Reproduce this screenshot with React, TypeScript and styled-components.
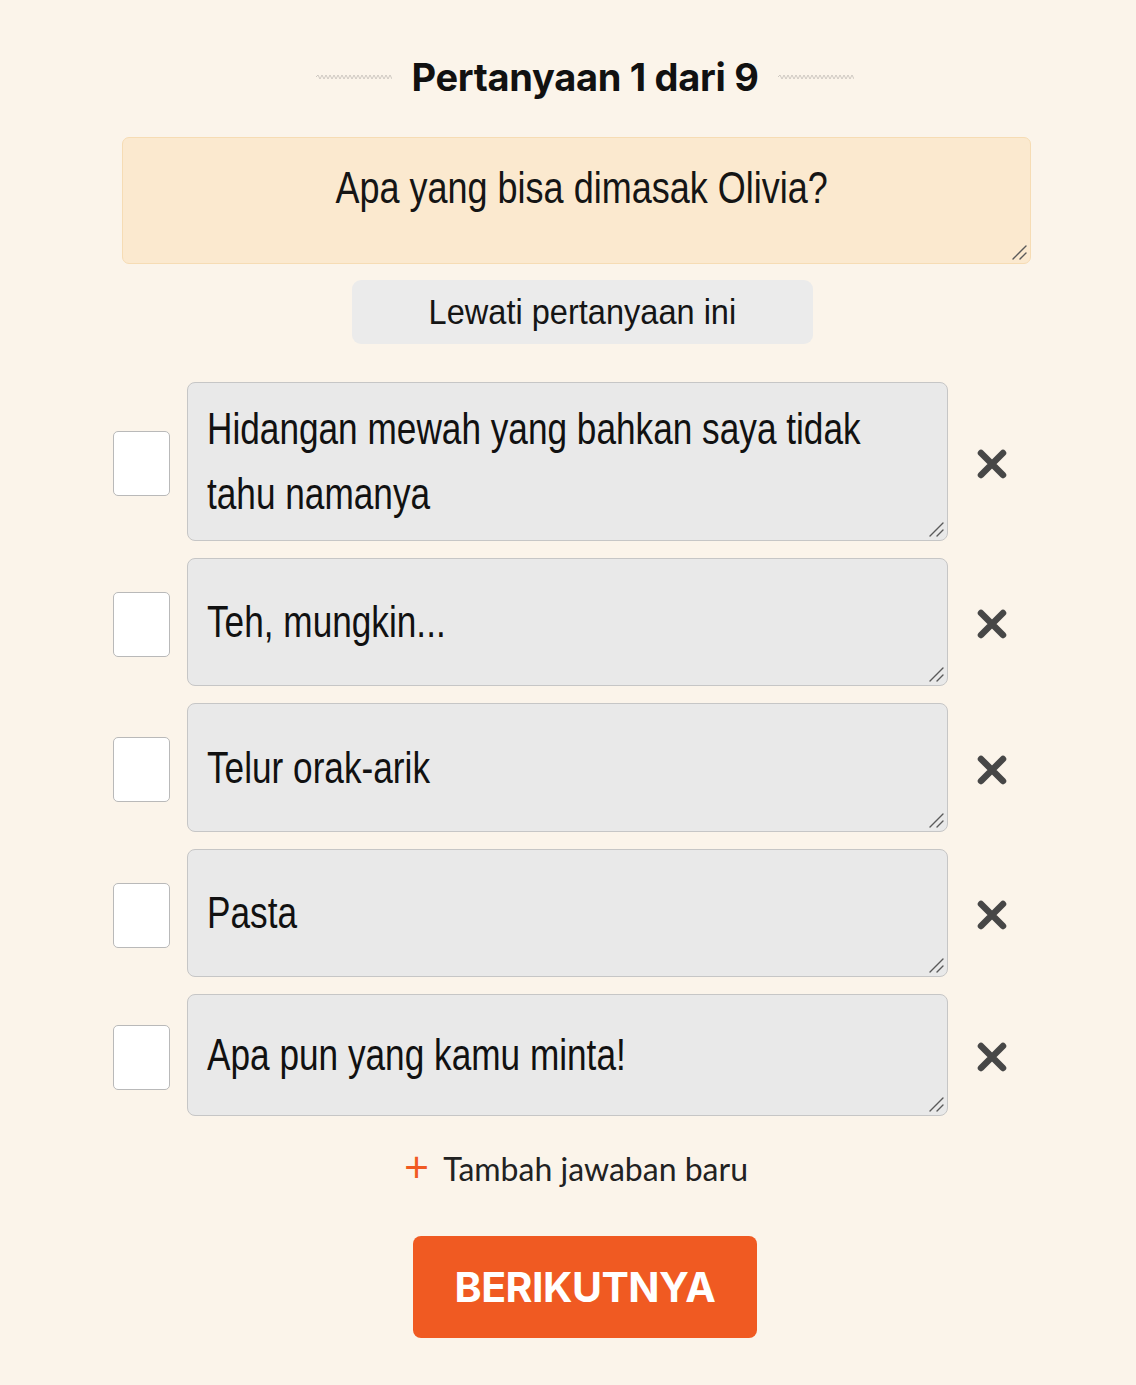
import React from 'react';
import styled, { createGlobalStyle } from 'styled-components';

const GlobalStyle = createGlobalStyle`
  html, body {
    margin: 0;
    padding: 0;
    background: #fbf4ea;
  }
  * {
    box-sizing: border-box;
  }
`;

// the reference uses a condensed face; Liberation Sans squeezed to 80% matches it
const narrow = `"Liberation Sans", Arial, sans-serif`;
const SQUEEZE = 0.8;

type Answer = { text: string; height: number; lines: number };

const answers: Answer[] = [
  { text: 'Hidangan mewah yang bahkan saya tidak tahu namanya', height: 159, lines: 2 },
  { text: 'Teh, mungkin...', height: 128, lines: 1 },
  { text: 'Telur orak-arik', height: 129, lines: 1 },
  { text: 'Pasta', height: 128, lines: 1 },
  { text: 'Apa pun yang kamu minta!', height: 122, lines: 1 },
];

const Wave = () => (
  <WaveSvg viewBox="0 0 76 6" width="76" height="6">
    <path
      d="M0 3 l2 -2 l2 4 l2 -4 l2 4 l2 -4 l2 4 l2 -4 l2 4 l2 -4 l2 4 l2 -4 l2 4 l2 -4 l2 4 l2 -4 l2 4 l2 -4 l2 4 l2 -4 l2 4 l2 -4 l2 4 l2 -4 l2 4 l2 -4 l2 4 l2 -4 l2 4 l2 -4 l2 4 l2 -4 l2 4 l2 -4 l2 4 l2 -4 l2 4 l2 -4 l2 4"
      fill="none"
      stroke="#c9c4bd"
      strokeWidth="0.9"
    />
  </WaveSvg>
);

const CloseIcon = () => (
  <svg width="32" height="32" viewBox="0 0 32 32">
    <path d="M5 5 L27 27 M27 5 L5 27" stroke="#474747" strokeWidth="6.5" strokeLinecap="round" />
  </svg>
);

const ResizeGrip = () => (
  <Grip viewBox="0 0 16 16" width="16" height="16">
    <path d="M2 15 L15 2 M9 15 L15 9" stroke="#5a5a5a" strokeWidth="1.4" strokeLinecap="round" />
  </Grip>
);

export default function App() {
  return (
    <Page>
      <GlobalStyle />
      <Header>
        <Wave />
        <Title>Pertanyaan 1 dari 9</Title>
        <Wave />
      </Header>

      <QuestionFrame>
        <QuestionInput defaultValue="Apa yang bisa dimasak Olivia?" />
        <ResizeGrip />
      </QuestionFrame>

      <SkipButton type="button">
        <SkipLabel>Lewati pertanyaan ini</SkipLabel>
      </SkipButton>

      <AnswerList>
        {answers.map((a, i) => (
          <AnswerRow key={i}>
            <CheckBox type="checkbox" />
            <AnswerFrame $h={a.height}>
              <AnswerInput defaultValue={a.text} $pad={(a.height - 3 - a.lines * 65) / 2} />
              <ResizeGrip />
            </AnswerFrame>
            <RemoveButton type="button" aria-label="hapus">
              <CloseIcon />
            </RemoveButton>
          </AnswerRow>
        ))}
      </AnswerList>

      <AddLink type="button">
        <Plus>+</Plus>
        Tambah jawaban baru
      </AddLink>

      <NextButton type="button">BERIKUTNYA</NextButton>
    </Page>
  );
}

const Page = styled.div`
  width: 1136px;
  min-height: 1385px;
  display: flex;
  flex-direction: column;
  align-items: center;
  padding-top: 52px;
`;

const Header = styled.div`
  display: flex;
  align-items: center;
  gap: 19px;
  height: 50px;
  margin-left: 34px;
`;

const WaveSvg = styled.svg`
  display: block;
`;

const Title = styled.h1`
  margin: 0;
  font-family: Inter, Roboto, sans-serif;
  font-weight: 700;
  font-size: 38px;
  color: #111;
  letter-spacing: -0.3px;
`;

const Grip = styled.svg`
  position: absolute;
  right: 3px;
  bottom: 3px;
  pointer-events: none;
`;

const QuestionFrame = styled.div`
  position: relative;
  margin-top: 35px;
  margin-left: 17px;
  width: 909px;
  height: 127px;
  background: #fbe9cf;
  border: 1.5px solid #f6dcb4;
  border-radius: 7px;
  overflow: hidden;
`;

const QuestionInput = styled.textarea`
  display: block;
  width: ${906 / SQUEEZE}px;
  height: 100%;
  transform: scaleX(${SQUEEZE});
  transform-origin: 0 0;
  background: transparent;
  border: none;
  padding: 25px 20px 0 34px;
  font-family: ${narrow};
  font-size: 45px;
  line-height: 50px;
  color: #151515;
  text-align: center;
  outline: none;
  overflow: hidden;
  resize: none;
`;

const SkipButton = styled.button`
  margin-top: 16px;
  margin-left: 28px;
  width: 461px;
  height: 64px;
  border: none;
  border-radius: 9px;
  background: #ebebeb;
  cursor: pointer;
  display: flex;
  align-items: center;
  justify-content: center;
`;

const SkipLabel = styled.span`
  display: inline-block;
  font-family: ${narrow};
  font-size: 35px;
  color: #151515;
  transform: scaleX(0.93);
  white-space: nowrap;
`;

const AnswerList = styled.div`
  margin-top: 38px;
  margin-left: -15px;
  display: flex;
  flex-direction: column;
  gap: 17px;
`;

const AnswerRow = styled.div`
  display: flex;
  align-items: center;
`;

const CheckBox = styled.input`
  appearance: none;
  margin: 4px 17px 0 0;
  width: 57px;
  height: 65px;
  background: #fff;
  border: 1.5px solid #b9b9b9;
  border-radius: 5px;
`;

const AnswerFrame = styled.div<{ $h: number }>`
  position: relative;
  width: 761px;
  height: ${(p) => p.$h}px;
  background: #e9e9e9;
  border: 1.5px solid #c6c6c6;
  border-radius: 8px;
  overflow: hidden;
`;

const AnswerInput = styled.textarea<{ $pad: number }>`
  display: block;
  width: ${758 / SQUEEZE}px;
  height: 100%;
  transform: scaleX(${SQUEEZE});
  transform-origin: 0 0;
  padding: ${(p) => p.$pad}px 30px 0 ${19 / SQUEEZE}px;
  background: transparent;
  border: none;
  font-family: ${narrow};
  font-size: 44px;
  line-height: 65px;
  color: #111;
  outline: none;
  overflow: hidden;
  resize: none;
`;

const RemoveButton = styled.button`
  margin: 4px 0 0 28px;
  width: 32px;
  height: 32px;
  padding: 0;
  border: none;
  background: none;
  display: flex;
  align-items: center;
  justify-content: center;
  cursor: pointer;
`;

const AddLink = styled.button`
  margin-top: 33px;
  margin-left: 16px;
  display: flex;
  align-items: center;
  gap: 14px;
  border: none;
  background: none;
  font-family: Lato, "Open Sans", sans-serif;
  font-size: 32px;
  color: #222;
  cursor: pointer;
  padding: 0;
`;

const Plus = styled.span`
  color: #f05a22;
  font-family: "Open Sans", sans-serif;
  font-size: 44px;
  font-weight: 400;
  line-height: 1;
  margin-top: -6px;
`;

const NextButton = styled.button`
  margin-top: 48px;
  margin-left: 34px;
  width: 344px;
  height: 102px;
  border: none;
  border-radius: 8px;
  background: #f05a22;
  color: #fff;
  font-family: Inter, Roboto, sans-serif;
  font-weight: 700;
  font-size: 41px;
  letter-spacing: -0.5px;
  cursor: pointer;
`;
